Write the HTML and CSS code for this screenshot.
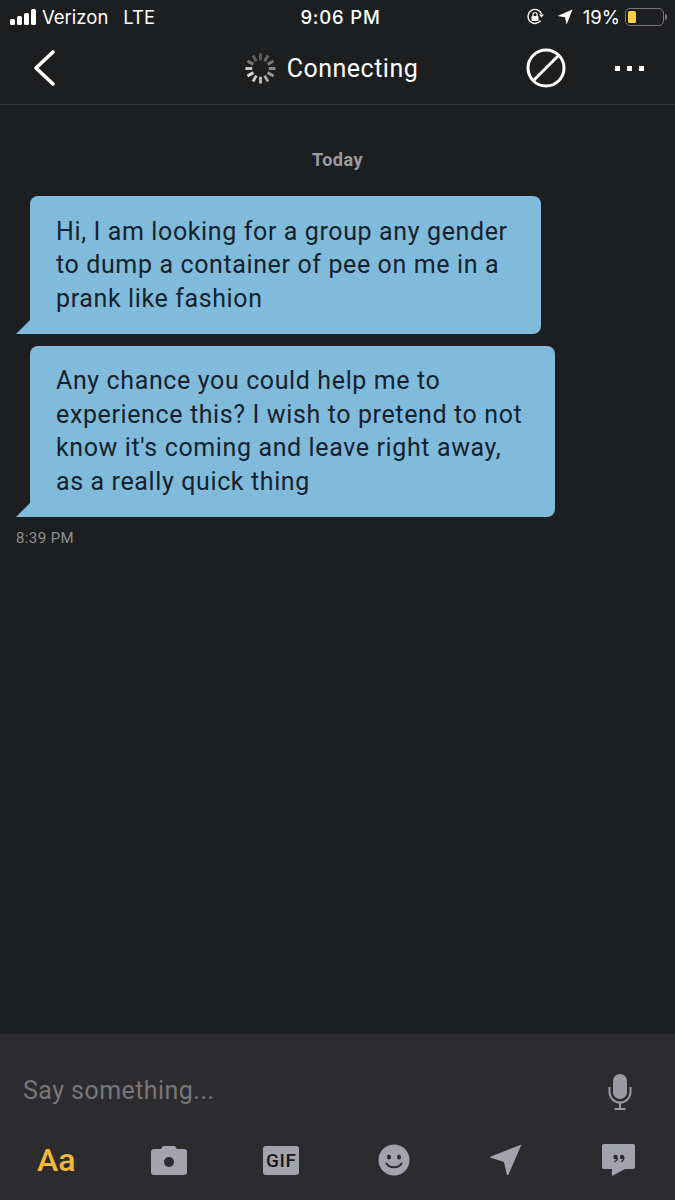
FILE: index.html
```html
<!DOCTYPE html>
<html>
<head>
    <title>Chat</title>
    <link rel="stylesheet" href="styles.css">
</head>
<body>
    <div id="screen">
        <header>
            <div class="status-bar">
                <div class="status-left">
                    <span class="signal"><i class="b1"></i><i class="b2"></i><i class="b3"></i><i class="b4"></i></span>
                    <span class="carrier">Verizon</span>
                    <span class="network">LTE</span>
                </div>
                <div class="status-time">9:06 PM</div>
                <div class="status-right">
                    <svg class="lock-icon" width="19" height="18" viewBox="0 0 19 18">
                        <path d="M14.5 12.8A7 7 0 1 1 15.6 6" fill="none" stroke="#fff" stroke-width="1.4"/>
                        <path d="M13 6.5h5l-2.5 3z" fill="#fff"/>
                        <rect x="5.5" y="8" width="7" height="5" rx="1" fill="#fff"/>
                        <path d="M7 8V6.5a2 2 0 0 1 4 0V8" fill="none" stroke="#fff" stroke-width="1.2"/>
                    </svg>
                    <svg class="arrow-icon" width="16" height="16" viewBox="0 0 16 16">
                        <path d="M15.5.5L9.6 15.5 8 8.2 .5 7z" fill="#fff"/>
                    </svg>
                    <span class="battery-pct">19%</span>
                    <span class="battery"><span class="battery-level"></span></span>
                    <span class="battery-tip"></span>
                </div>
            </div>
            <nav class="nav-bar">
                <a href="#" class="back">
                    <svg width="24" height="36" viewBox="0 0 24 36">
                        <path d="M21 2L4 18l17 16" fill="none" stroke="#fff" stroke-width="3.6" stroke-linecap="round" stroke-linejoin="round"/>
                    </svg>
                </a>
                <div class="nav-title">
                    <svg class="spinner" width="33" height="33" viewBox="0 0 34 34">
                        <g stroke-width="3" stroke-linecap="butt" fill="none">
                            <path d="M17 1.500v7" stroke="#5e5e5e" transform="rotate(0 17 17)"/>
                            <path d="M17 1.500v7" stroke="#666" transform="rotate(30 17 17)"/>
                            <path d="M17 1.500v7" stroke="#777" transform="rotate(60 17 17)"/>
                            <path d="M17 1.500v7" stroke="#8a8a8a" transform="rotate(90 17 17)"/>
                            <path d="M17 1.500v7" stroke="#999" transform="rotate(120 17 17)"/>
                            <path d="M17 1.500v7" stroke="#aaa" transform="rotate(150 17 17)"/>
                            <path d="M17 1.500v7" stroke="#bbb" transform="rotate(180 17 17)"/>
                            <path d="M17 1.500v7" stroke="#ccc" transform="rotate(210 17 17)"/>
                            <path d="M17 1.500v7" stroke="#ddd" transform="rotate(240 17 17)"/>
                            <path d="M17 1.500v7" stroke="#ccc" transform="rotate(270 17 17)"/>
                            <path d="M17 1.500v7" stroke="#777" transform="rotate(300 17 17)"/>
                            <path d="M17 1.500v7" stroke="#5e5e5e" transform="rotate(330 17 17)"/>
                        </g>
                    </svg>
                    <span>Connecting</span>
                </div>
                <div class="nav-actions">
                    <svg width="40" height="40" viewBox="0 0 40 40">
                        <circle cx="20" cy="20" r="18" fill="none" stroke="#fff" stroke-width="3"/>
                        <path d="M8 32L32 8" stroke="#fff" stroke-width="3"/>
                    </svg>
                    <div class="more"><i></i><i></i><i></i></div>
                </div>
            </nav>
        </header>

        <main>
            <div class="day">Today</div>
            <div class="bubble bubble-first">Hi, I am looking for a group any gender<br>to dump a container of pee on me in a<br>prank like fashion</div>
            <div class="bubble">Any chance you could help me to<br>experience this? I wish to pretend to not<br>know it's coming and leave right away,<br>as a really quick thing</div>
            <div class="sent-time">8:39 PM</div>
        </main>

        <footer>
            <div class="input-row">
                <span class="placeholder">Say something...</span>
                <svg class="mic" width="24" height="36" viewBox="0 0 24 36">
                    <rect x="5" y="0" width="14" height="25" rx="7" fill="#9a9aa2"/>
                    <path d="M1.500 13v5a10.500 10.500 0 0 0 21 0v-5" fill="none" stroke="#9a9aa2" stroke-width="2"/>
                    <path d="M12 28v6M6.500 35h11" stroke="#9a9aa2" stroke-width="2"/>
                </svg>
            </div>
            <div class="tool-row">
                <span class="aa">Aa</span>
                <svg width="36" height="30" viewBox="0 0 36 30">
                    <path d="M3 4h7l2-3h12l2 3h7a3 3 0 0 1 3 3v20a3 3 0 0 1-3 3H3a3 3 0 0 1-3-3V7a3 3 0 0 1 3-3z" fill="#a3a3ad"/>
                    <circle cx="18" cy="17" r="5" fill="#2c2c2e"/>
                </svg>
                <span class="gif">GIF</span>
                <svg width="32" height="32" viewBox="0 0 32 32">
                    <circle cx="16" cy="16" r="15.500" fill="#a3a3ad"/>
                    <ellipse cx="11" cy="13" rx="2" ry="2.600" fill="#2c2c2e"/>
                    <ellipse cx="21" cy="13" rx="2" ry="2.600" fill="#2c2c2e"/>
                    <path d="M8.500 19.500c3 5 12 5 15 0" fill="none" stroke="#2c2c2e" stroke-width="2" stroke-linecap="round"/>
                </svg>
                <svg width="32" height="32" viewBox="0 0 32 32">
                    <path d="M31.500.500L18.500 30.500a.9.900 0 0 1-1.700 0L14 18 .800 13.800a.6.600 0 0 1 0-1.200z" fill="#a3a3ad"/>
                </svg>
                <svg width="33" height="32" viewBox="0 0 33 32">
                    <path d="M2 0h29a2 2 0 0 1 2 2v21a2 2 0 0 1-2 2H23L11 31.500a.8.800 0 0 1-1.200-.8L10 25H2a2 2 0 0 1-2-2V2a2 2 0 0 1 2-2z" fill="#a3a3ad"/>
                    <circle cx="13.500" cy="13" r="2.200" fill="#2c2c2e"/>
                    <circle cx="20" cy="13" r="2.200" fill="#2c2c2e"/>
                    <path d="M15.500 13.500c0 2-1.200 3.500-3.200 4.500M22 13.500c0 2-1.200 3.500-3.200 4.500" fill="none" stroke="#2c2c2e" stroke-width="1.300"/>
                </svg>
            </div>
        </footer>
    </div>
</body>
</html>
```

FILE: styles.css
```css
* {
    box-sizing: border-box;
}

html, body {
    margin: 0;
    padding: 0;
    height: 100%;
}

body {
    font-family: 'Roboto', 'Liberation Sans', sans-serif;
    background-color: #1d1e20;
    color: #fff;
}

#screen {
    width: 675px;
    height: 1200px;
    display: flex;
    flex-direction: column;
    overflow: hidden;
}

header {
    height: 105px;
    border-bottom: 1px solid #2e2f31;
    flex-shrink: 0;
}

.status-bar {
    height: 34px;
    padding: 0 9px 0 10px;
    display: grid;
    grid-template-columns: 1fr auto 1fr;
    align-items: center;
    font-family: 'Inter', 'Liberation Sans', sans-serif;
    font-size: 18.500px;
}

.status-left {
    display: flex;
    align-items: center;
}

.signal {
    display: flex;
    align-items: flex-end;
    gap: 2px;
    margin-right: 6px;
}

.signal i {
    display: block;
    width: 5px;
    background-color: #fff;
    border-radius: 1.500px;
}

.signal .b1 { height: 6px; }
.signal .b2 { height: 9px; }
.signal .b3 { height: 12px; }
.signal .b4 { height: 16px; }

.network {
    margin-left: 15px;
}

.status-time {
    margin-left: 5px;
    font-weight: 500;
    letter-spacing: .8px;
}

.status-right {
    display: flex;
    align-items: center;
    justify-content: flex-end;
}

.arrow-icon {
    margin-left: 12px;
}

.battery-pct {
    margin-left: 10px;
}

.battery {
    display: block;
    width: 39px;
    height: 18px;
    margin-left: 5px;
    padding: 2px;
    border: 1.500px solid #77777a;
    border-radius: 5px;
}

.battery-level {
    display: block;
    width: 8px;
    height: 100%;
    background-color: #f5cf47;
    border-radius: 1.500px;
}

.battery-tip {
    width: 2px;
    height: 6px;
    margin-left: 1px;
    margin-right: -1px;
    background-color: #77777a;
    border-radius: 0 2px 2px 0;
}

.nav-bar {
    height: 70px;
    padding: 0 31px 2px 32px;
    display: grid;
    grid-template-columns: 1fr auto 1fr;
    align-items: center;
}

.back {
    display: flex;
}

.nav-title {
    display: flex;
    align-items: center;
    gap: 10px;
    margin-right: 14px;
    font-size: 25px;
    letter-spacing: .5px;
}

.nav-actions {
    display: flex;
    align-items: center;
    justify-content: flex-end;
    gap: 49px;
}

.more {
    display: flex;
    gap: 7px;
}

.more i {
    display: block;
    width: 5px;
    height: 5px;
    background-color: #fff;
}

main {
    flex: 1;
    padding: 0 0 0 30px;
}

.day {
    margin: 44px 0 25px -30px;
    text-align: center;
    font-size: 18px;
    font-weight: 700;
    line-height: 22px;
    letter-spacing: .5px;
    color: #9c9c9f;
}

.bubble {
    position: relative;
    width: fit-content;
    padding: 18.500px 33px 18.500px 26px;
    background-color: #80bbdc;
    border-radius: 8px 8px 8px 0;
    color: #16222c;
    font-size: 25px;
    line-height: 33.500px;
    letter-spacing: .62px;
    white-space: nowrap;
}

.bubble::before {
    content: "";
    position: absolute;
    left: -14px;
    bottom: 0;
    border-style: solid;
    border-width: 0 0 14px 14px;
    border-color: transparent transparent #80bbdc transparent;
}

.bubble-first {
    margin-bottom: 12px;
}

.sent-time {
    margin: 12.500px 0 0 -14px;
    font-size: 15px;
    line-height: 18px;
    letter-spacing: .4px;
    color: #8e8e90;
}

footer {
    height: 166px;
    flex-shrink: 0;
    background-color: #2c2c2e;
}

.input-row {
    height: 92px;
    padding: 20px 43px 0 23px;
    display: flex;
    align-items: center;
    justify-content: space-between;
}

.placeholder {
    font-size: 25px;
    letter-spacing: .45px;
    color: #77777b;
}

.mic {
    margin-top: 4px;
}

.tool-row {
    height: 68px;
    display: grid;
    grid-template-columns: repeat(6, 1fr);
    align-items: center;
    justify-items: center;
}

.aa {
    font-size: 32px;
    font-weight: 500;
    color: #f3b63f;
}

.gif {
    width: 36px;
    height: 29px;
    display: flex;
    align-items: center;
    justify-content: center;
    background-color: #a3a3ad;
    border-radius: 3px;
    color: #17171a;
    font-size: 19px;
    font-weight: 500;
    letter-spacing: .5px;
}
```
